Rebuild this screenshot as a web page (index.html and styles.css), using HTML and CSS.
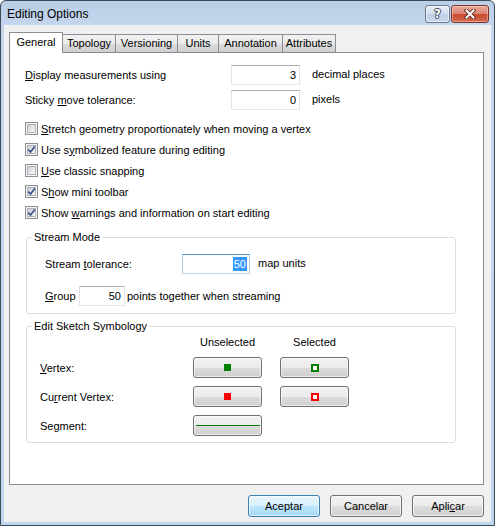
FILE: index.html
```html
<!DOCTYPE html>
<html>
<head>
<meta charset="utf-8">
<title>Editing Options</title>
<link rel="stylesheet" href="styles.css">
</head>
<body>
<div class="window">
  <div class="titlebar">
    <span class="title">Editing Options</span>
    <div class="caption-btns">
      <div class="cap cap-help">?</div>
      <div class="cap cap-close">
        <svg width="12" height="10" viewBox="0 0 12 10"><path d="M2.5 1.5 L9.5 8.5 M9.5 1.5 L2.5 8.5" stroke="#5a2a20" stroke-width="3.8" stroke-linecap="square"/><path d="M2.5 1.5 L9.5 8.5 M9.5 1.5 L2.5 8.5" stroke="#fff" stroke-width="2" stroke-linecap="square"/></svg>
      </div>
    </div>
  </div>
  <div class="client">
    <div class="tabs">
      <div class="tab tab-active w-general">General</div>
      <div class="tab w-topology">Topology</div>
      <div class="tab w-versioning">Versioning</div>
      <div class="tab w-units">Units</div>
      <div class="tab w-annotation">Annotation</div>
      <div class="tab w-attributes">Attributes</div>
    </div>
    <div class="panel">
      <div class="field-row">
        <span class="field-label"><u>D</u>isplay measurements using</span>
        <span class="textbox tb-main">3</span>
        <span class="unit">decimal places</span>
      </div>
      <div class="field-row row-gap">
        <span class="field-label">Sticky <u>m</u>ove tolerance:</span>
        <span class="textbox tb-main">0</span>
        <span class="unit">pixels</span>
      </div>

      <div class="checks">
        <div class="check-row"><span class="cb"><span class="cb-in"></span></span><span class="cb-label"><u>S</u>tretch geometry proportionately when moving a vertex</span></div>
        <div class="check-row"><span class="cb"><span class="cb-in"><svg class="tick" viewBox="0 0 9 9"><path d="M1.3 4.6 L3.6 7 L7.8 1.4" fill="none" stroke="#3b4f86" stroke-width="1.7"/></svg></span></span><span class="cb-label">Use s<u>y</u>mbolized feature during editing</span></div>
        <div class="check-row"><span class="cb"><span class="cb-in"></span></span><span class="cb-label"><u>U</u>se classic snapping</span></div>
        <div class="check-row"><span class="cb"><span class="cb-in"><svg class="tick" viewBox="0 0 9 9"><path d="M1.3 4.6 L3.6 7 L7.8 1.4" fill="none" stroke="#3b4f86" stroke-width="1.7"/></svg></span></span><span class="cb-label">S<u>h</u>ow mini toolbar</span></div>
        <div class="check-row"><span class="cb"><span class="cb-in"><svg class="tick" viewBox="0 0 9 9"><path d="M1.3 4.6 L3.6 7 L7.8 1.4" fill="none" stroke="#3b4f86" stroke-width="1.7"/></svg></span></span><span class="cb-label">Show <u>w</u>arnings and information on start editing</span></div>
      </div>

      <fieldset class="group group-stream">
        <legend>Stream Mode</legend>
        <div class="group-body stream-body">
          <div class="field-row">
            <span class="stream-label">Stream <u>t</u>olerance:</span>
            <span class="textbox textbox-focus tb-stream"><span class="sel">50</span></span>
            <span class="unit-near">map units</span>
          </div>
          <div class="field-row group-row">
            <span class="group-label"><u>G</u>roup</span>
            <span class="textbox tb-group">50</span>
            <span class="unit-tight">points together when streaming</span>
          </div>
        </div>
      </fieldset>

      <fieldset class="group group-sketch">
        <legend>Edit Sketch Symbology</legend>
        <div class="sketch-grid">
          <span></span>
          <span class="col-head">Unselected</span>
          <span class="col-head">Selected</span>

          <span class="sym-label"><u>V</u>ertex:</span>
          <div class="pbtn"><span class="sq sq-green"></span></div>
          <div class="pbtn"><span class="sq-o sq-o-green"></span></div>

          <span class="sym-label">Cu<u>r</u>rent Vertex:</span>
          <div class="pbtn"><span class="sq sq-red"></span></div>
          <div class="pbtn"><span class="sq-o sq-o-red"></span></div>

          <span class="sym-label">Se<u>g</u>ment:</span>
          <div class="pbtn"><span class="seg"></span></div>
          <span></span>
        </div>
      </fieldset>
    </div>
    <div class="footer">
      <div class="btn btn-default">Aceptar</div>
      <div class="btn">Cancelar</div>
      <div class="btn">Apli<u>c</u>ar</div>
    </div>
  </div>
</div>
</body>
</html>
```

FILE: styles.css
```css
* { box-sizing: border-box; }
html, body { margin: 0; padding: 0; }
body {
  width: 495px;
  height: 526px;
  overflow: hidden;
  background: #ffffff;
  font-family: "Liberation Sans", Arial, sans-serif;
  font-size: 11px;
  color: #000;
}
u { text-decoration: underline; text-underline-offset: 1px; }

.window {
  width: 495px;
  height: 526px;
  border: 1px solid #3e4a58;
  border-radius: 6px 6px 0 0;
  background: linear-gradient(#b9cee7, #c4d6ed 24px, #c2d7ee 200px, #bfd6ef);
  padding: 0 3px 3px 3px;
  display: flex;
  flex-direction: column;
}

.titlebar {
  height: 24px;
  display: flex;
  justify-content: space-between;
  padding-left: 3px;
}
.title {
  font-size: 12px;
  line-height: 26px;
}
.caption-btns {
  display: flex;
  margin-top: 4px;
  margin-right: 2px;
  height: 18px;
}
.cap {
  height: 18px;
  border: 1px solid #6c7a8e;
  border-radius: 3px;
  display: flex;
  align-items: center;
  justify-content: center;
}
.cap-help {
  width: 25px;
  margin-right: 1px;
  background: linear-gradient(#e6eef7, #d3e0ef 50%, #bfd0e6 51%, #cbdaee);
  box-shadow: inset 0 0 0 1px rgba(255,255,255,0.55);
  color: #fff;
  font-family: "DejaVu Sans", sans-serif;
  font-weight: bold;
  font-size: 12px;
  line-height: 16px;
  text-shadow: 1px 0 0 #3d4a5c, -1px 0 0 #3d4a5c, 0 1px 0 #3d4a5c, 0 -1px 0 #3d4a5c;
}
.cap-close {
  width: 38px;
  border-color: #7e3426;
  background: linear-gradient(#e9a89a, #d98370 50%, #c8492f 51%, #d5684f);
  box-shadow: inset 0 0 0 1px rgba(255,255,255,0.35);
}

.client {
  flex: 1;
  background: #f0f0f0;
  display: flex;
  flex-direction: column;
  padding: 7px 7px 5px 5px;
}

.tabs {
  display: flex;
  align-items: flex-end;
  height: 21px;
  margin-bottom: -1px;
  position: relative;
  z-index: 1;
}
.tab {
  height: 18px;
  margin-bottom: 1px;
  margin-left: -1px;
  border: 1px solid #898c95;
  border-bottom: none;
  background: linear-gradient(#f2f2f2, #ebebeb 50%, #dddddd 51%, #cfcfcf);
  text-align: center;
  line-height: 17px;
  white-space: nowrap;
}
.tab-active {
  height: 21px;
  margin-bottom: 0;
  margin-left: 0;
  background: #ffffff;
  line-height: 19px;
  position: relative;
  z-index: 2;
}
.w-general { width: 54px; }
.w-topology { width: 54px; }
.w-versioning { width: 63px; }
.w-units { width: 42px; }
.w-annotation { width: 65px; }
.w-attributes { width: 54px; }

.panel {
  flex: 1;
  border: 1px solid #898c95;
  background: #ffffff;
  padding: 12px 0 0 15px;
}

.field-row {
  display: flex;
  align-items: center;
  height: 20px;
  white-space: nowrap;
}
.row-gap { margin-top: 5px; }
.field-label { width: 206px; }
.textbox {
  height: 20px;
  border: 1px solid #e2e3ea;
  border-top-color: #abadb3;
  border-bottom-color: #e3e9ef;
  background: #fff;
  text-align: right;
  padding-right: 3px;
  line-height: 18px;
}
.tb-main { width: 69px; }
.unit { margin-left: 12px; margin-top: -2px; }

.checks { margin-top: 8px; }
.check-row {
  display: flex;
  align-items: center;
  height: 21px;
  white-space: nowrap;
}
.cb {
  width: 13px;
  height: 13px;
  border: 1px solid #8e8f8f;
  background: #f4f4f4;
  padding: 1px;
  flex: none;
  display: block;
}
.cb-in {
  display: block;
  width: 9px;
  height: 9px;
  border: 1px solid #aeb3b9;
  background: linear-gradient(135deg, #cbcfd5, #e8e9eb 60%, #f6f6f6);
}
.tick {
  display: block;
  width: 9px;
  height: 9px;
  margin: -1px 0 0 -1px;
  overflow: visible;
}
.cb-label { margin-left: 3px; }

.group {
  margin: 7px 0 0 1px;
  width: 430px;
  border: 1px solid #d5dfe5;
  border-radius: 3px;
  padding: 0;
  min-width: 0;
}
.group legend {
  margin-left: 5px;
  padding: 0 2px;
  line-height: 14px;
  white-space: nowrap;
}
.group-body { padding: 10px 0 7px 18px; }
.stream-label { width: 137px; }
.tb-stream { width: 68px; }
.textbox-focus {
  border-color: #a4c9e3;
  border-top-color: #5d98ca;
  border-bottom-color: #b7d9ed;
  padding-right: 2px;
}
.sel {
  background: #3399ff;
  color: #fff;
  padding: 1px 1px;
}
.unit-near { margin-left: 8px; margin-top: -2px; }
.group-row { margin-top: 12px; }
.group-label { width: 34px; }
.tb-group { width: 46px; }
.unit-tight { margin-left: 2px; }

.group-sketch { margin-top: 5px; }
.sketch-grid {
  display: grid;
  grid-template-columns: 135px 69px 69px;
  grid-template-rows: 14px 21px 21px 21px;
  column-gap: 18px;
  row-gap: 8px;
  align-items: center;
  padding: 2px 0 6px 13px;
}
.col-head { text-align: center; line-height: 14px; }
.sym-label { white-space: nowrap; }
.pbtn {
  height: 21px;
  border: 1px solid #707070;
  border-radius: 3px;
  background: linear-gradient(#f2f2f2, #ebebeb 50%, #dddddd 51%, #cfcfcf);
  box-shadow: inset 0 0 0 1px rgba(255,255,255,0.6);
  display: flex;
  align-items: center;
  justify-content: center;
}
.sq { width: 7px; height: 7px; display: block; }
.sq-green { background: #008000; }
.sq-red { background: #ff0000; }
.sq-o { width: 8px; height: 8px; display: block; border: 2px solid; background: #fff; }
.sq-o-green { border-color: #008000; }
.sq-o-red { border-color: #ff0000; }
.seg { display: block; width: 64px; height: 1px; background: #007a00; }

.footer {
  margin-top: 10px;
  display: flex;
  justify-content: flex-end;
  gap: 10px;
}
.btn {
  width: 72px;
  height: 22px;
  border: 1px solid #707070;
  border-radius: 3px;
  background: linear-gradient(#f2f2f2, #ebebeb 50%, #dddddd 51%, #cfcfcf);
  box-shadow: inset 0 0 0 1px rgba(255,255,255,0.7);
  text-align: center;
  line-height: 20px;
}
.btn-default {
  border-color: #3c7fb1;
  background: linear-gradient(#eaf6fd, #d9f0fc 50%, #bee6fd 51%, #a7d9f5);
  box-shadow: inset 0 0 0 1px rgba(255,255,255,0.6), 0 0 0 0 #fff;
}
```
